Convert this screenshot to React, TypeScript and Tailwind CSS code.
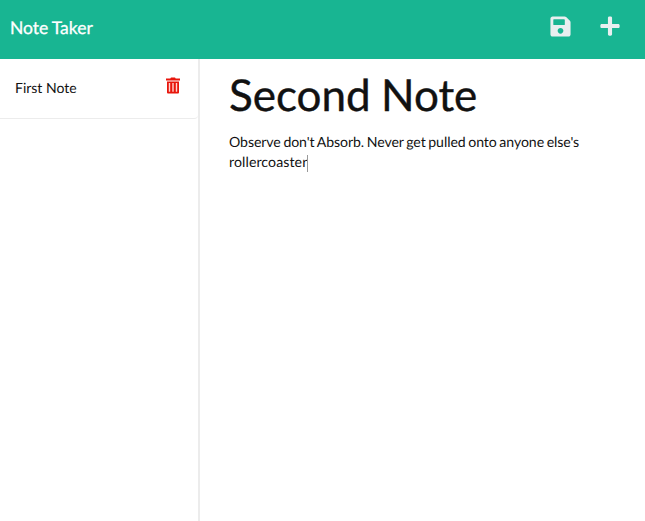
import { FaPlus, FaSave } from "react-icons/fa";

function TrashIcon() {
  return (
    <svg viewBox="0 0 14 17" className="h-[17px] w-3.5" fill="none" aria-hidden="true">
      <path d="M5 0.500h4l.7 1H14v2H0v-2h4.300z" fill="#e8160c" />
      <path d="M1 4.500h12V15.500a1 1 0 0 1-1 1H2a1 1 0 0 1-1-1z" fill="#e8160c" />
      <path d="M3.500 6v8.800M7 6v8.800M10.500 6v8.800" stroke="#ffd5d0" strokeWidth="1.4" />
    </svg>
  );
}

export default function App() {
  return (
    <div className="flex h-[521px] w-[645px] flex-col bg-white font-['Lato',sans-serif] text-[#111] [text-rendering:geometricPrecision]">
      <header className="flex h-[59px] shrink-0 items-center bg-[#18b592] pl-[10px] pr-[24px] text-white">
        <a className="flex-1 pb-[2px] text-[17.5px] [word-spacing:-0.5px] [-webkit-text-stroke:0.3px_white]">Note Taker</a>
        <div className="flex items-center gap-[27px] pb-[7px] text-[#e9eff0]">
          <FaSave size={23} />
          <FaPlus size={22} />
        </div>
      </header>
      <div className="flex flex-1">
        <aside className="w-[200px] border-r-2 border-[#ececec]">
          <ul>
            <li className="flex h-[60px] items-center justify-between rounded-br border-b border-[#ececec] pb-[3px] pl-[15px] pr-[18px] text-[14px]">
              <span>First Note</span>
              <span className="pb-1"><TrashIcon /></span>
            </li>
          </ul>
        </aside>
        <main className="flex-1 pl-[29px] pt-[9px]">
          <h1 className="text-[44px] leading-[54px] [word-spacing:-1px] [-webkit-text-stroke:0.4px_#111]">Second Note</h1>
          <p className="w-[370px] pt-[11px] text-[14.1px] leading-[20px] tracking-[-0.07px] [word-spacing:-0.9px]">
            Observe don't Absorb. Never get pulled onto anyone else's{" "}
            <span className="tracking-[0.1px]">rollercoaster</span>
            <span className="inline-block h-[17px] w-px bg-[#999] align-middle" />
          </p>
        </main>
      </div>
    </div>
  );
}
